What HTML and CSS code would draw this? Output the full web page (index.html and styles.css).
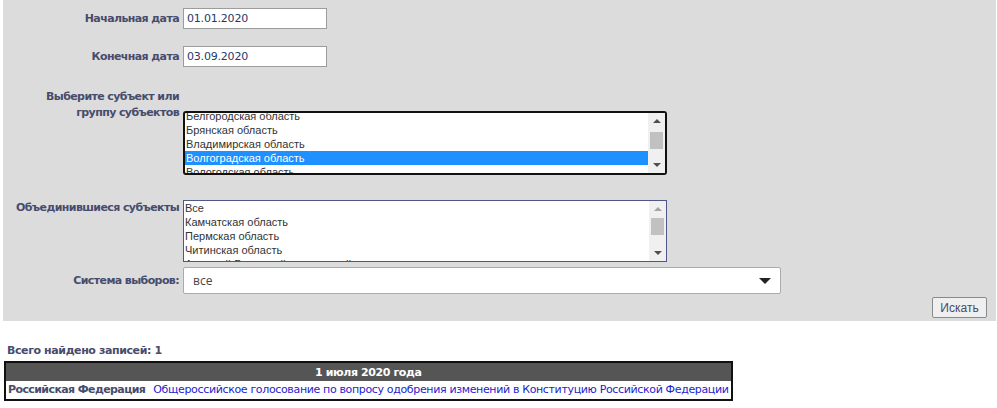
FILE: index.html
```html
<!DOCTYPE html>
<html lang="ru">
<head>
  <meta charset="UTF-8" />
  <title>Поиск выборов</title>
  <link rel="stylesheet" href="styles.css">
</head>
<body>
  <form class="filter">
    <div class="row">
      <label class="label">Начальная дата</label>
      <input class="date" type="text" value="01.01.2020" />
    </div>
    <div class="row">
      <label class="label">Конечная дата</label>
      <input class="date" type="text" value="03.09.2020" />
    </div>
    <div class="row row-top">
      <label class="label">Выберите субъект или<br>группу субъектов</label>
      <div class="listbox focused">
        <div class="options scrolled">
          <div class="option">Белгородская область</div>
          <div class="option">Брянская область</div>
          <div class="option">Владимирская область</div>
          <div class="option selected">Волгоградская область</div>
          <div class="option">Вологодская область</div>
        </div>
        <div class="scrollbar">
          <span class="arrow up"></span>
          <span class="thumb thumb-1"></span>
          <span class="arrow down"></span>
        </div>
      </div>
    </div>
    <div class="row row-top row-merged">
      <label class="label">Объединившиеся субъекты</label>
      <div class="listbox merged">
        <div class="options">
          <div class="option">Все</div>
          <div class="option">Камчатская область</div>
          <div class="option">Пермская область</div>
          <div class="option">Читинская область</div>
          <div class="option">Агинский Бурятский автономный округ</div>
        </div>
        <div class="scrollbar">
          <span class="arrow up light"></span>
          <span class="thumb thumb-2"></span>
          <span class="arrow down"></span>
        </div>
      </div>
    </div>
    <div class="row row-system">
      <label class="label">Система выборов:</label>
      <div class="dropdown">
        <span>все</span>
        <span class="caret"></span>
      </div>
    </div>
    <div class="actions">
      <button type="button" class="button">Искать</button>
    </div>
  </form>

  <div class="total">Всего найдено записей: 1</div>
  <table class="results">
    <tr><th colspan="2">1 июля 2020 года</th></tr>
    <tr>
      <td class="region">Российская Федерация</td>
      <td><a href="#">Общероссийское голосование по вопросу одобрения изменений в Конституцию Российской Федерации</a></td>
    </tr>
  </table>
</body>
</html>
```

FILE: styles.css
```css
body {
  margin: 0 1px 0 3px;
  font-family: 'DejaVu Sans', Verdana, sans-serif;
  font-size: 11px;
  color: #333;
  background: #fff;
}

.filter {
  background: #dcdcdc;
  padding: 8px 9px 3px 0;
}

.row {
  display: grid;
  grid-template-columns: 176px 1fr;
  column-gap: 4px;
  align-items: center;
  margin-bottom: 17px;
}

.row-top {
  align-items: start;
  margin-top: 22px;
  margin-bottom: 0;
}

.row-merged {
  margin-top: 25px;
}

.row-system {
  margin-top: 5px;
  margin-bottom: 0;
}

.label {
  text-align: right;
  font-weight: bold;
  color: #474c6c;
  line-height: 16px;
  letter-spacing: -0.6px;
  white-space: nowrap;
}

.date {
  width: 144px;
  height: 21px;
  box-sizing: border-box;
  border: 1px solid #9c9c9c;
  padding: 0 3px;
  font-family: 'DejaVu Sans', Verdana, sans-serif;
  font-size: 11px;
  letter-spacing: -0.2px;
  color: #23396a;
  background: #fff;
}

.listbox {
  width: 484px;
  background: #fff;
  display: flex;
  overflow: hidden;
  box-sizing: border-box;
}

.listbox.focused {
  margin-top: 22px;
  height: 64px;
  border: 2px solid #111;
  border-radius: 3px;
}

.listbox.merged {
  height: 62px;
  border: 1px solid #4e5785;
}

.options {
  flex: 1;
  font-family: 'Liberation Sans', Arial, sans-serif;
  font-size: 11px;
  color: #333;
}

.options.scrolled {
  margin-top: -4px;
}

.option {
  height: 14px;
  line-height: 14px;
  padding-left: 1px;
  white-space: nowrap;
}

.option.selected {
  background: #1e90ff;
  color: #fff;
}

.scrollbar {
  width: 17px;
  background: #f0f0f0;
  position: relative;
}

.arrow {
  position: absolute;
  left: 5px;
  width: 0;
  height: 0;
  border-left: 4px solid transparent;
  border-right: 4px solid transparent;
}

.arrow.up {
  top: 6px;
  border-bottom: 4px solid #505050;
}

.arrow.up.light {
  border-bottom-color: #a3a3a3;
}

.arrow.down {
  bottom: 6px;
  border-top: 4px solid #505050;
}

.thumb {
  position: absolute;
  left: 2px;
  width: 13px;
  background: #c1c1c1;
}

.thumb-1 {
  top: 19px;
  height: 17px;
}

.thumb-2 {
  top: 17px;
  height: 17px;
}

.dropdown {
  width: 598px;
  height: 27px;
  box-sizing: border-box;
  border: 1px solid #aaa;
  border-radius: 2px;
  background: #fff;
  padding: 0 9px 0 9px;
  display: flex;
  align-items: center;
  justify-content: space-between;
  font-family: 'Open Sans', sans-serif;
  font-size: 12px;
  color: #444;
}

.caret {
  width: 0;
  height: 0;
  border-left: 6px solid transparent;
  border-right: 6px solid transparent;
  border-top: 6px solid #222;
}

.actions {
  display: flex;
  justify-content: flex-end;
  margin-top: 3px;
}

.button {
  height: 21px;
  width: 55px;
  padding: 0;
  border: 1px solid #8a8a8a;
  border-radius: 2px;
  background: #efefef;
  font-family: 'Liberation Sans', Arial, sans-serif;
  font-size: 12px;
  color: #4a4a6a;
}

.total {
  margin: 23px 0 0 4px;
  font-weight: bold;
  color: #474c6c;
  line-height: 14px;
  letter-spacing: -0.4px;
}

.results {
  margin: 3px 0 0 1px;
  border: 2px solid #111;
  border-collapse: collapse;
}

.results th {
  background: #555;
  color: #fff;
  font-weight: bold;
  height: 18px;
  padding: 0;
  text-align: center;
  letter-spacing: -0.4px;
}

.results td {
  padding: 2px 2px 3px 2px;
  white-space: nowrap;
}

.results .region {
  font-weight: bold;
  color: #474c6c;
  letter-spacing: -0.6px;
  padding-right: 6px;
}

.results a {
  color: #2323cc;
  text-decoration: none;
  letter-spacing: -0.35px;
}
```
